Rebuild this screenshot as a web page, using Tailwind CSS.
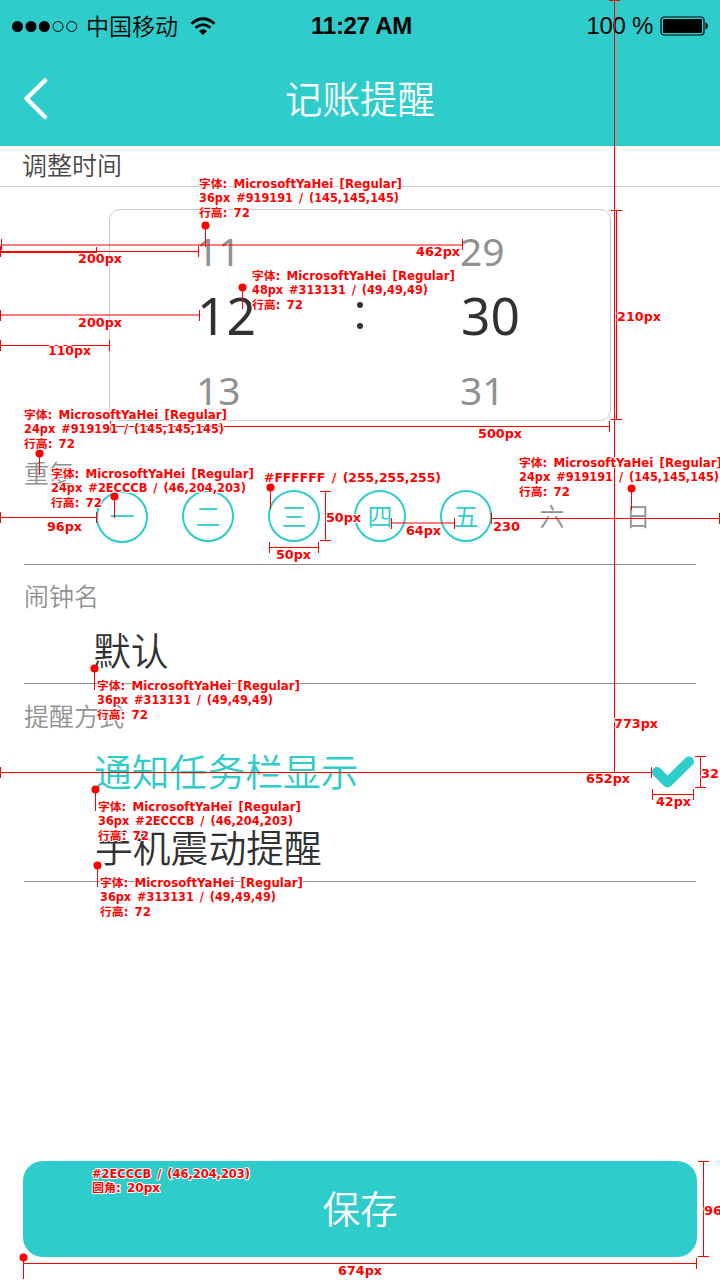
<!DOCTYPE html>
<html lang="zh-CN">
<head>
<meta charset="utf-8">
<title>记账提醒</title>
<script src="https://cdn.jsdelivr.net/npm/@tailwindcss/browser@4"></script>
</head>
<body class="bg-white">
<div class="relative flex h-[1280px] w-[720px] flex-col overflow-hidden bg-white font-['Noto_Sans_CJK_SC',sans-serif] font-[350] text-[#313131]">

  <header class="h-[146px] shrink-0 bg-[#2ecccb]">
    <div class="grid h-[52px] grid-cols-3 items-center pr-[11px] pl-3 text-black">
      <div class="flex items-center">
        <svg class="h-3 w-[66px]" viewBox="0 0 66 12"><g fill="#000"><circle cx="5.5" cy="6.5" r="5.5"/><circle cx="19" cy="6.5" r="5.5"/><circle cx="32.3" cy="6.5" r="5.5"/></g><g fill="none" stroke="#000"><circle cx="46" cy="6.5" r="5"/><circle cx="59.7" cy="6.5" r="5"/></g></svg>
        <span class="ml-2 pb-[2px] text-[23px] leading-[46px] whitespace-nowrap">中国移动</span>
        <svg class="ml-[12px] h-[18px] w-[26px] shrink-0" viewBox="0 0 26 18"><g fill="none" stroke="#000" stroke-width="2.8"><path d="M1.5 6.8Q13 -3.2 24.500 6.800"/><path d="M5.500 10.800Q13 4.500 20.500 10.800"/></g><path d="M9 14Q13 10.500 17 14L13 18Z"/></svg>
      </div>
      <div class="pl-[2px] text-center font-['Liberation_Sans',sans-serif] text-[24px] font-bold tracking-[-0.3px]">11:27 AM</div>
      <div class="flex items-center justify-end gap-[7px] font-['Liberation_Sans',sans-serif] text-[24px] font-normal">
        <span class="tracking-[-0.3px]">100 %</span>
        <svg class="h-5 w-[49px]" viewBox="0 0 49 20"><rect x="1" y="1" width="43" height="18" rx="3" fill="none" stroke="#000" stroke-width="1.200"/><rect x="3" y="3" width="39" height="14" rx="1"/><path d="M45.500 6.500Q48 7.500 48 10T45.500 13.500Z"/></svg>
      </div>
    </div>
    <div class="grid h-[94px] grid-cols-[100px_1fr_100px] items-center">
      <svg class="ml-[22px] h-[46px] w-7" viewBox="0 0 28 46" fill="none" stroke="#fff" stroke-width="4.500" stroke-linecap="round" stroke-linejoin="round"><path d="M23 4.500L4.500 22.500L23 41"/></svg>
      <h1 class="pb-1 text-center text-[37.600px] leading-[90px] font-[350] text-white">记账提醒</h1>
    </div>
  </header>

  <h2 class="h-[41px] shrink-0 border-b border-[#c9c9c9] pl-[22px] text-[25px] leading-[37px] font-[350] text-[#484848]">调整时间</h2>

  <section class="mt-[22px] ml-[109px] grid h-[212px] w-[502px] shrink-0 grid-cols-[198px_103px_1fr] grid-rows-[80px_48px_82px] items-center rounded-[11px] border border-[#c9c9c9] font-['Noto_Sans',sans-serif] text-[39px] leading-none font-normal text-[#919191]">
    <div class="pl-[86px]">11</div><div></div><div class="pl-[49px]">29</div>
    <div class="pt-[4px] pl-[87px] text-[51.500px] text-[#313131]">12</div>
    <div class="flex flex-col items-center gap-[15px] pt-[3px]"><i class="size-[6px] rounded-full bg-[#313131]"></i><i class="size-[6px] rounded-full bg-[#313131]"></i></div>
    <div class="pt-[4px] pl-[50px] text-[51.500px] text-[#313131]">30</div>
    <div class="self-end pb-[11px] pl-[86px]">13</div><div></div><div class="self-end pb-[11px] pl-[49px]">31</div>
  </section>

  <section class="mx-6 h-[144px] shrink-0 border-b border-[#8e8e8e] pt-[31px] text-[25px] text-[#919191]">
    <div class="h-[38px] leading-[40px]">重复</div>
    <div class="flex items-start gap-[34px] pl-[72px] text-[#2ecccb]">
      <div class="mt-px size-[52px] rounded-full border-2 border-[#2ecccb] text-center leading-[44px]">一</div>
      <div class="size-[52px] rounded-full border-2 border-[#2ecccb] text-center leading-[46px]">二</div>
      <div class="size-[52px] rounded-full border-2 border-[#2ecccb] text-center leading-[46px]">三</div>
      <div class="size-[52px] rounded-full border-2 border-[#2ecccb] text-center leading-[46px]">四</div>
      <div class="size-[52px] rounded-full border-2 border-[#2ecccb] text-center leading-[46px]">五</div>
      <div class="size-[52px] text-center leading-[50px] text-[#919191]">六</div>
      <div class="size-[52px] text-center leading-[50px] text-[#919191]">日</div>
    </div>
  </section>

  <section class="mx-6 h-[119px] shrink-0 border-b border-[#8e8e8e] pt-[12px]">
    <div class="h-10 text-[25px] leading-[37px] text-[#919191]">闹钟名</div>
    <div class="pl-[69px] text-[37.800px] leading-[63px]">默认</div>
  </section>

  <section class="mx-6 h-[198px] shrink-0 border-b border-[#8e8e8e] pt-[13px]">
    <div class="h-[39px] text-[25px] leading-[37px] text-[#919191]">提醒方式</div>
    <div class="flex h-[72px] items-center justify-between pr-[2px] pl-[70px] text-[37.800px] leading-[68px] text-[#2ecccb]">
      <span class="pb-[5px]">通知任务栏显示</span>
      <svg class="h-8 w-[42px]" viewBox="0 0 42 32" fill="none" stroke="#2ecccb" stroke-width="10" stroke-linecap="round" stroke-linejoin="round"><path d="M5 16L15.500 26.500L37 5.500"/></svg>
    </div>
    <div class="pl-[71px] text-[37.800px] leading-[76px]">手机震动提醒</div>
  </section>

  <button class="mt-[279px] ml-[23px] h-24 w-[674px] shrink-0 rounded-[20px] bg-[#2ecccb] pb-1 text-[37.600px] font-[350] text-white">保存</button>

  <!-- measurement layer -->
  <svg class="absolute inset-0 h-[1280px] w-[720px]" viewBox="0 0 720 1280">
    <g stroke="#f00" stroke-width="1" fill="none" shape-rendering="crispEdges">
      <path d="M609 .5H620M614.500 0V772M611 210.500H622M616.500 210V420M611 419.500H622"/>
      <path d="M1.500 239V250M462.500 239V250M0 251.500H199M0 252.500H97M.5 246V257M96.500 247V252M198.500 246V257"/>
      <path d="M.5 310V321M199.500 310V321M0 345.500H110M.5 340V351M109.500 340V351"/>
      <path d="M110 426.500H610M110.500 421V432M609.500 421V432"/>
      <path d="M0 517.500H97M.5 512V523M96.500 512V523"/>
      <path d="M269 547.500H319M269.500 542V553M318.500 542V553M325.500 491V541M320 491.500H331M320 540.500H331"/>
      <path d="M391.500 518V529M454.500 518V529M491 518.500H720M491.500 513V524M719.500 513V524"/>
      <path d="M0 772.500H652M.5 767V778M651.500 767V778M652 794.500H694M652.500 789V800M693.500 789V800"/>
      <path d="M700.500 756V788M695 756.500H706M695 787.500H706"/>
      <path d="M703.500 1161V1257M698 1161.500H709M698 1256.500H709M23 1263.500H697M696.500 1258V1269M23.500 1258V1279"/>
      <path d="M205.500 225V247M242.500 287V309M39.500 453V475M114.500 496V518M270.500 487V509M631.500 488V510M94.500 668V690M95.500 789V811M97.500 865V887"/>
    </g>
    <g fill="#f00" fill-opacity=".5"><rect x="1" y="244" width="461" height="2"/><rect y="314" width="200" height="2"/><rect x="391" y="522" width="64" height="2"/></g>
    <g fill="#f00"><circle cx="205.500" cy="225.500" r="4"/><circle cx="242.500" cy="287.500" r="4"/><circle cx="39.500" cy="453.500" r="4"/><circle cx="114.500" cy="496.500" r="4"/><circle cx="270.500" cy="487.500" r="4"/><circle cx="631.500" cy="488.500" r="4"/><circle cx="94.500" cy="668.500" r="4"/><circle cx="95.500" cy="789.500" r="4"/><circle cx="97.500" cy="865.500" r="4"/><circle cx="23.500" cy="1257.500" r="4"/></g>

    <g class="font-['DejaVu_Sans','Noto_Sans_CJK_SC',sans-serif] text-[11.500px] font-bold [word-spacing:2px]" fill="#f00" stroke="#fff" stroke-width="2" stroke-linejoin="round" paint-order="stroke">
      <text x="199" y="188" textLength="203" lengthAdjust="spacingAndGlyphs">字体: MicrosoftYaHei [Regular]</text>
      <text x="199" y="202" textLength="200" lengthAdjust="spacingAndGlyphs">36px #919191 / (145,145,145)</text>
      <text x="199" y="217" textLength="51" lengthAdjust="spacingAndGlyphs">行高: 72</text>

      <text x="252" y="280" textLength="203" lengthAdjust="spacingAndGlyphs">字体: MicrosoftYaHei [Regular]</text>
      <text x="252" y="294" textLength="176" lengthAdjust="spacingAndGlyphs">48px #313131 / (49,49,49)</text>
      <text x="252" y="309" textLength="51" lengthAdjust="spacingAndGlyphs">行高: 72</text>

      <text x="24" y="419" textLength="203" lengthAdjust="spacingAndGlyphs">字体: MicrosoftYaHei [Regular]</text>
      <text x="24" y="433" textLength="200" lengthAdjust="spacingAndGlyphs">24px #919191 / (145,145,145)</text>
      <text x="24" y="448" textLength="51" lengthAdjust="spacingAndGlyphs">行高: 72</text>

      <text x="51" y="478" textLength="203" lengthAdjust="spacingAndGlyphs">字体: MicrosoftYaHei [Regular]</text>
      <text x="51" y="492" textLength="195" lengthAdjust="spacingAndGlyphs">24px #2ECCCB / (46,204,203)</text>
      <text x="51" y="507" textLength="51" lengthAdjust="spacingAndGlyphs">行高: 72</text>

      <text x="264" y="482" textLength="177" lengthAdjust="spacingAndGlyphs">#FFFFFF / (255,255,255)</text>

      <text x="519" y="467" textLength="203" lengthAdjust="spacingAndGlyphs">字体: MicrosoftYaHei [Regular]</text>
      <text x="519" y="481" textLength="200" lengthAdjust="spacingAndGlyphs">24px #919191 / (145,145,145)</text>
      <text x="519" y="496" textLength="51" lengthAdjust="spacingAndGlyphs">行高: 72</text>

      <text x="97" y="690" textLength="203" lengthAdjust="spacingAndGlyphs">字体: MicrosoftYaHei [Regular]</text>
      <text x="97" y="704" textLength="176" lengthAdjust="spacingAndGlyphs">36px #313131 / (49,49,49)</text>
      <text x="97" y="719" textLength="51" lengthAdjust="spacingAndGlyphs">行高: 72</text>

      <text x="98" y="811" textLength="203" lengthAdjust="spacingAndGlyphs">字体: MicrosoftYaHei [Regular]</text>
      <text x="98" y="825" textLength="195" lengthAdjust="spacingAndGlyphs">36px #2ECCCB / (46,204,203)</text>
      <text x="98" y="840" textLength="51" lengthAdjust="spacingAndGlyphs">行高: 72</text>

      <text x="100" y="887" textLength="203" lengthAdjust="spacingAndGlyphs">字体: MicrosoftYaHei [Regular]</text>
      <text x="100" y="901" textLength="176" lengthAdjust="spacingAndGlyphs">36px #313131 / (49,49,49)</text>
      <text x="100" y="916" textLength="51" lengthAdjust="spacingAndGlyphs">行高: 72</text>

      <text x="92" y="1178" textLength="158" lengthAdjust="spacingAndGlyphs">#2ECCCB / (46,204,203)</text>
      <text x="92" y="1192" textLength="68" lengthAdjust="spacingAndGlyphs">圆角: 20px</text>

      <text x="416" y="256" textLength="44" lengthAdjust="spacingAndGlyphs">462px</text>
      <text x="78" y="263" textLength="44" lengthAdjust="spacingAndGlyphs">200px</text>
      <text x="78" y="327" textLength="44" lengthAdjust="spacingAndGlyphs">200px</text>
      <text x="48" y="355" textLength="43" lengthAdjust="spacingAndGlyphs">110px</text>
      <text x="617" y="321" textLength="44" lengthAdjust="spacingAndGlyphs">210px</text>
      <text x="478" y="438" textLength="44" lengthAdjust="spacingAndGlyphs">500px</text>
      <text x="47" y="531" textLength="35" lengthAdjust="spacingAndGlyphs">96px</text>
      <text x="276" y="559" textLength="35" lengthAdjust="spacingAndGlyphs">50px</text>
      <text x="326" y="522" textLength="35" lengthAdjust="spacingAndGlyphs">50px</text>
      <text x="406" y="535" textLength="35" lengthAdjust="spacingAndGlyphs">64px</text>
      <text x="493" y="531" textLength="27" lengthAdjust="spacingAndGlyphs">230</text>
      <text x="614" y="728" textLength="44" lengthAdjust="spacingAndGlyphs">773px</text>
      <text x="586" y="783" textLength="44" lengthAdjust="spacingAndGlyphs">652px</text>
      <text x="656" y="806" textLength="35" lengthAdjust="spacingAndGlyphs">42px</text>
      <text x="701" y="778" textLength="18" lengthAdjust="spacingAndGlyphs">32</text>
      <text x="704" y="1215" textLength="18" lengthAdjust="spacingAndGlyphs">96</text>
      <text x="338" y="1275" textLength="44" lengthAdjust="spacingAndGlyphs">674px</text>
    </g>
  </svg>
</div>
</body>
</html>
